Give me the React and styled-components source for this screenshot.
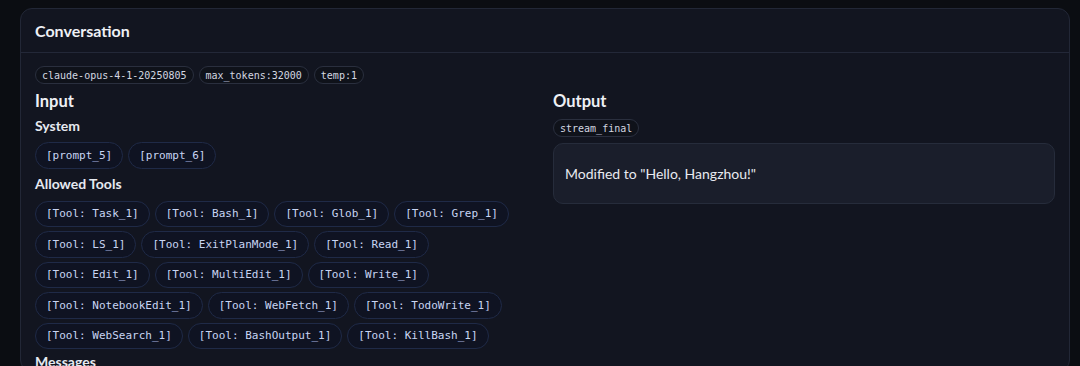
import React from 'react'
import styled, { createGlobalStyle } from 'styled-components'

const GlobalStyle = createGlobalStyle`
  html, body {
    margin: 0;
    padding: 0;
    background: #0b0d12;
    overflow: hidden;
  }
  body {
    font-family: Lato, "Noto Sans", sans-serif;
    color: #e6e8ee;
  }
`

const Page = styled.div`
  padding: 8px 10px 0 20px;
`

const Card = styled.section`
  background: #121520;
  border: 1px solid #222736;
  border-radius: 12px;
`

const CardHeader = styled.header`
  height: 43px;
  display: flex;
  align-items: center;
  padding: 0 14px;
  border-bottom: 1px solid #232838;
`

const Title = styled.h2`
  margin: 0;
  font-size: 16px;
  font-weight: 700;
  color: #eef0f5;
`

const CardBody = styled.div`
  padding: 13px 14px 0;
`

const ChipRow = styled.div`
  display: flex;
  flex-wrap: wrap;
  gap: ${p => p.$gap || '4px 5px'};
  margin-bottom: ${p => p.$mb || 0}px;
`

const MetaChip = styled.span`
  display: inline-flex;
  align-items: center;
  height: 16px;
  padding: 0 6px;
  border: 1px solid #2a2f3e;
  border-radius: 9px;
  background: #0f121a;
  font-family: "DejaVu Sans Mono", "Liberation Mono", monospace;
  font-size: 10px;
  color: #d3d7e0;
`

const Columns = styled.div`
  display: grid;
  grid-template-columns: 1fr 1fr;
  column-gap: 16px;
  margin-top: 7px;
`

const Column = styled.div`
  display: flex;
  flex-direction: column;
  align-items: flex-start;
  min-width: 0;
`

const SectionTitle = styled.h3`
  margin: 0 0 ${p => p.$mb}px;
  font-size: 16.5px;
  line-height: 20px;
  font-weight: 700;
  color: #eef0f5;
`

const SubTitle = styled.h4`
  margin: 0 0 ${p => p.$mb}px;
  font-size: 14px;
  line-height: 18px;
  font-weight: 700;
  color: #e6e9f0;
`

const TagChip = styled.span`
  display: inline-flex;
  align-items: center;
  height: 24.5px;
  padding: 0 10px;
  border: 1px solid #1f2a47;
  border-radius: 14px;
  background: #0f1322;
  font-family: "DejaVu Sans Mono", "Liberation Mono", monospace;
  font-size: 11px;
  color: #c8d5f3;
  white-space: nowrap;
`

const OutputBox = styled.div`
  align-self: stretch;
  margin-top: 6px;
  padding: 20px 11px;
  border: 1px solid #262c3b;
  border-radius: 10px;
  background: #1a1e2b;
  font-size: 14px;
  line-height: 19px;
  color: #e8eaf0;
`

const meta = ['claude-opus-4-1-20250805', 'max_tokens:32000', 'temp:1']
const prompts = ['[prompt_5]', '[prompt_6]']
const tools = [
  'Task_1', 'Bash_1', 'Glob_1', 'Grep_1', 'LS_1', 'ExitPlanMode_1', 'Read_1',
  'Edit_1', 'MultiEdit_1', 'Write_1', 'NotebookEdit_1', 'WebFetch_1',
  'TodoWrite_1', 'WebSearch_1', 'BashOutput_1', 'KillBash_1',
]

export default function App() {
  return (
    <>
      <GlobalStyle />
      <Page>
        <Card>
          <CardHeader>
            <Title>Conversation</Title>
          </CardHeader>
          <CardBody>
            <ChipRow $gap="5px">
              {meta.map(m => <MetaChip key={m}>{m}</MetaChip>)}
            </ChipRow>
            <Columns>
              <Column>
                <SectionTitle $mb={6}>Input</SectionTitle>
                <SubTitle $mb={7}>System</SubTitle>
                <ChipRow $mb={6}>
                  {prompts.map(p => <TagChip key={p}>{p}</TagChip>)}
                </ChipRow>
                <SubTitle $mb={8}>Allowed Tools</SubTitle>
                <ChipRow $gap="4px 5px" $mb={4}>
                  {tools.map(t => <TagChip key={t}>[Tool: {t}]</TagChip>)}
                </ChipRow>
                <SubTitle $mb={0}>Messages</SubTitle>
              </Column>
              <Column>
                <SectionTitle $mb={8}>Output</SectionTitle>
                <MetaChip>stream_final</MetaChip>
                <OutputBox>Modified to "Hello, Hangzhou!"</OutputBox>
              </Column>
            </Columns>
          </CardBody>
        </Card>
      </Page>
    </>
  )
}
